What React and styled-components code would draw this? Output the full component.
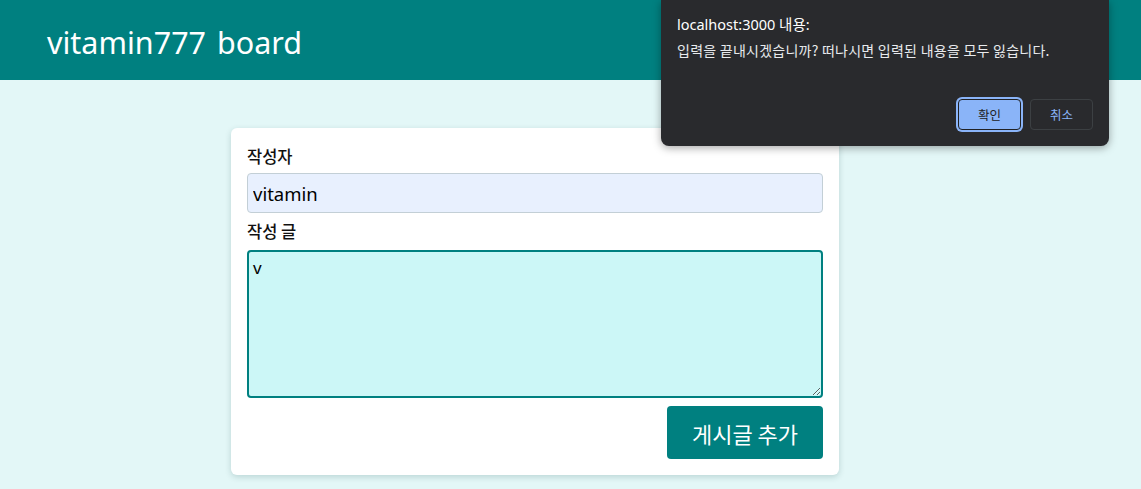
import React from "react";
import styled, { createGlobalStyle } from "styled-components";

const Global = createGlobalStyle`
  html, body { margin: 0; padding: 0; }
  body {
    background: #e3f7f7;
    font-family: "Noto Sans", "Noto Sans CJK KR", sans-serif;
    height: 489px;
    overflow: hidden;
  }
`;

const Header = styled.header`
  height: 80px;
  background: #008080;
  display: flex;
  align-items: center;
  padding-left: 47px;
  padding-top: 4px;
  box-sizing: border-box;
`;

const Title = styled.h1`
  margin: 0;
  color: #ffffff;
  font-size: 30.5px;
  font-weight: 400;
  word-spacing: 3px;
  font-family: "Noto Sans", "Noto Sans CJK KR", sans-serif;
`;

const Main = styled.main`
  padding: 48px 0 0 231px;
`;

const Card = styled.form`
  width: 608px;
  box-sizing: border-box;
  background: #ffffff;
  border-radius: 6px;
  box-shadow: 0 2px 6px rgba(0, 60, 60, 0.18);
  padding: 16px 16px 16px;
  display: flex;
  flex-direction: column;
`;

const Label = styled.label`
  font-family: "Noto Sans CJK KR", sans-serif;
  font-size: 16.5px;
  font-weight: 500;
  color: #111;
  line-height: 24px;
  margin-bottom: ${(p) => p.$gap}px;
`;

const TextInput = styled.input`
  height: 40px;
  box-sizing: border-box;
  border: 1px solid #c3cfd6;
  border-radius: 4px;
  background: #e8f0fe;
  padding: 0 5px;
  font-family: "Noto Sans", "Noto Sans CJK KR", sans-serif;
  font-size: 18.5px;
  color: #000;
  margin-bottom: 6px;
  outline: none;
`;

const TextArea = styled.textarea`
  height: 148px;
  box-sizing: border-box;
  border: 2px solid #008080;
  border-radius: 4px;
  background: #ccf7f7;
  padding: 4px 4px;
  font-family: "Noto Sans", "Noto Sans CJK KR", sans-serif;
  font-size: 17px;
  color: #000;
  outline: none;
  resize: vertical;
  margin-bottom: 8px;
`;

const Actions = styled.div`
  display: flex;
  justify-content: flex-end;
`;

const SubmitButton = styled.button`
  width: 156px;
  height: 53px;
  background: #008080;
  color: #ffffff;
  border: none;
  border-radius: 4px;
  font-family: "Noto Sans CJK KR", sans-serif;
  font-size: 22px;
  font-weight: 400;
  cursor: pointer;
`;

const Dialog = styled.div`
  position: absolute;
  top: 0;
  left: 661px;
  width: 448px;
  height: 146px;
  box-sizing: border-box;
  background: #292a2d;
  border-radius: 0 0 8px 8px;
  box-shadow: 0 2px 8px rgba(0, 0, 0, 0.35);
  padding: 14px 16px 16px;
  display: flex;
  flex-direction: column;
  font-family: "Noto Sans CJK KR", sans-serif;
`;

const DialogTitle = styled.div`
  color: #ffffff;
  font-size: 14.5px;
  line-height: 20px;
  font-family: "Noto Sans", "Noto Sans CJK KR", sans-serif;
`;

const DialogMessage = styled.div`
  color: #e8eaed;
  font-size: 14px;
  letter-spacing: 0.25px;
  line-height: 20px;
  margin-top: 6px;
`;

const DialogActions = styled.div`
  margin-top: auto;
  display: flex;
  justify-content: flex-end;
  gap: 9px;
`;

const DialogButton = styled.button`
  width: 63px;
  height: 31px;
  box-sizing: border-box;
  border-radius: 4px;
  font-family: "Noto Sans CJK KR", sans-serif;
  font-size: 12.5px;
  cursor: pointer;
  background: ${(p) => (p.$primary ? "#8ab4f8" : "transparent")};
  color: ${(p) => (p.$primary ? "#202124" : "#8ab4f8")};
  border: 1px solid ${(p) => (p.$primary ? "#202124" : "#3c4043")};
  box-shadow: ${(p) => (p.$primary ? "0 0 0 2px #8ab4f8" : "none")};
`;

export default function App() {
  return (
    <>
      <Global />
      <Header>
        <Title>vitamin777 board</Title>
      </Header>
      <Main>
        <Card onSubmit={(e) => e.preventDefault()}>
          <Label $gap={5}>작성자</Label>
          <TextInput defaultValue="vitamin" />
          <Label $gap={7}>작성 글</Label>
          <TextArea defaultValue="v" />
          <Actions>
            <SubmitButton type="submit">게시글 추가</SubmitButton>
          </Actions>
        </Card>
      </Main>
      <Dialog>
        <DialogTitle>localhost:3000 내용:</DialogTitle>
        <DialogMessage>
          입력을 끝내시겠습니까? 떠나시면 입력된 내용을 모두 잃습니다.
        </DialogMessage>
        <DialogActions>
          <DialogButton $primary>확인</DialogButton>
          <DialogButton>취소</DialogButton>
        </DialogActions>
      </Dialog>
    </>
  );
}
